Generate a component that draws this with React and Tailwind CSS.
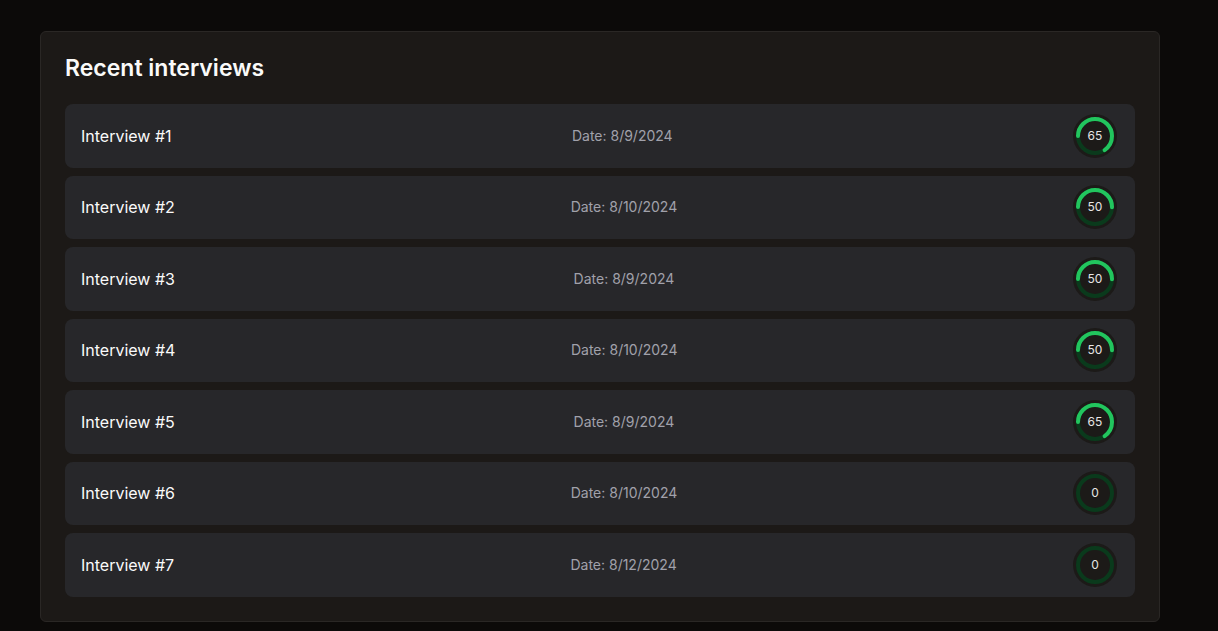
import React from 'react';

const interviews = [
  { id: 1, date: '8/9/2024', score: 65 },
  { id: 2, date: '8/10/2024', score: 50 },
  { id: 3, date: '8/9/2024', score: 50 },
  { id: 4, date: '8/10/2024', score: 50 },
  { id: 5, date: '8/9/2024', score: 65 },
  { id: 6, date: '8/10/2024', score: 0 },
  { id: 7, date: '8/12/2024', score: 0 },
];

function ScoreRing({ score }) {
  const r = 17;
  const c = 2 * Math.PI * r;
  return (
    <div className="relative mr-0.5 w-[44px] h-[44px] rounded-full bg-[#1c1a18] flex items-center justify-center">
      <svg width="44" height="44" viewBox="0 0 44 44" className="absolute inset-0 rotate-180">
        <circle cx="22" cy="22" r={r} fill="none" stroke="#0a3a1c" strokeWidth="4" />
        {score > 0 && (
          <circle
            cx="22"
            cy="22"
            r={r}
            fill="none"
            stroke="#22c55e"
            strokeWidth="4"
            strokeLinecap="round"
            strokeDasharray={c}
            strokeDashoffset={c * (1 - score / 100)}
          />
        )}
      </svg>
      <span className="relative text-[12px] text-[#e7e5e4]">{score}</span>
    </div>
  );
}

export default function App() {
  return (
    <div className="min-h-screen bg-[#0c0a09] pt-[31px] px-10 font-['Inter',sans-serif]">
      <div className="w-[1120px] rounded-md border border-[#2a2725] bg-[#1c1917] p-6">
        <h2 className="text-[23px] leading-6 font-semibold text-[#fafaf9] mb-6">Recent interviews</h2>
        <div className="flex flex-col gap-2">
          {interviews.map((it) => (
            <div
              key={it.id}
              className="h-[63.5px] rounded-lg bg-[#27272a] px-4 flex items-center justify-between"
            >
              <span className="text-base text-[#fafafa]">Interview #{it.id}</span>
              <span className="text-sm text-[#a1a1aa]">Date: {it.date}</span>
              <ScoreRing score={it.score} />
            </div>
          ))}
        </div>
      </div>
    </div>
  );
}
